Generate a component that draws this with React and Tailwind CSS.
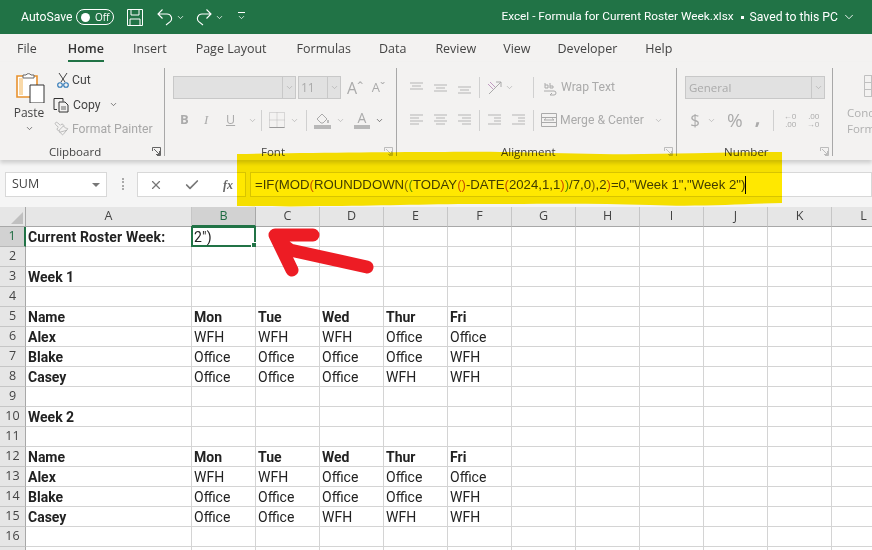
import React from 'react';
import { ChevronDown, X, Check, Paintbrush } from 'lucide-react';

const UI_FONT = 'font-["Open_Sans","Noto_Sans",sans-serif]';
const COLUMNS = ['A', 'B', 'C', 'D', 'E', 'F', 'G', 'H', 'I', 'J', 'K', 'L'];

const TABS = [
  { label: 'File', gap: 'ml-[17px]' },
  { label: 'Home', gap: 'ml-[31px]', active: true },
  { label: 'Insert', gap: 'ml-[29px]' },
  { label: 'Page Layout', gap: 'ml-[29px]' },
  { label: 'Formulas', gap: 'ml-[30px]' },
  { label: 'Data', gap: 'ml-[28px]' },
  { label: 'Review', gap: 'ml-[29px]' },
  { label: 'View', gap: 'ml-[27px]' },
  { label: 'Developer', gap: 'ml-[27px]' },
  { label: 'Help', gap: 'ml-[28px]' },
];

// sheet contents by row number, columns A to F
const ROWS = {
  1: [{ t: 'Current Roster Week:', b: true }],
  3: [{ t: 'Week 1', b: true }],
  5: ['Name', 'Mon', 'Tue', 'Wed', 'Thur', 'Fri'].map((t) => ({ t, b: true })),
  6: [{ t: 'Alex', b: true }, 'WFH', 'WFH', 'WFH', 'Office', 'Office'],
  7: [{ t: 'Blake', b: true }, 'Office', 'Office', 'Office', 'Office', 'WFH'],
  8: [{ t: 'Casey', b: true }, 'Office', 'Office', 'Office', 'WFH', 'WFH'],
  10: [{ t: 'Week 2', b: true }],
  12: ['Name', 'Mon', 'Tue', 'Wed', 'Thur', 'Fri'].map((t) => ({ t, b: true })),
  13: [{ t: 'Alex', b: true }, 'WFH', 'WFH', 'Office', 'Office', 'Office'],
  14: [{ t: 'Blake', b: true }, 'Office', 'Office', 'Office', 'Office', 'WFH'],
  15: [{ t: 'Casey', b: true }, 'Office', 'Office', 'WFH', 'WFH', 'WFH'],
};

function Chev({ className = '' }) {
  return <ChevronDown size={9} strokeWidth={1.6} className={`shrink-0 text-[#a6a6a6] ${className}`} />;
}

function Lines({ widths, className = '' }) {
  // alignment glyph: stacked grey bars
  return (
    <svg width="15" height="14" viewBox="0 0 15 14" className={`shrink-0 ${className}`}>
      {widths.map(([x1, x2, y]) => (
        <line key={y} x1={x1} x2={x2} y1={y} y2={y} stroke="#b5b5b5" strokeWidth="1" />
      ))}
    </svg>
  );
}

function Launcher({ dim }) {
  return (
    <svg width="9" height="9" viewBox="0 0 9 9" className="shrink-0">
      <path d="M.5 4V.5H8.5V8.5H5M2 2l5.5 5.5M7.5 4v3.5H4" fill="none" stroke={dim ? '#b5b5b5' : '#555'} strokeWidth="0.9" />
    </svg>
  );
}

function VSep({ className = '' }) {
  return <div className={`w-px h-[21px] bg-[#d0d0d0] shrink-0 ${className}`} />;
}

function UndoIcon({ className = '' }) {
  return (
    <svg width="16" height="18" viewBox="0 0 16 18" className={className}>
      <path d="M5.500 1.500L1 6l4.500 4.500M1 6h9a4.500 4.500 0 0 1 3.200 7.700L9 17" fill="none" stroke="currentColor" strokeWidth="1.100" />
    </svg>
  );
}

function Group({ width, label, labelClass, children, dim }) {
  return (
    <div className={`relative flex flex-col shrink-0 h-[88px] mt-[6px] border-r border-[#a8a8a8] ${width}`}>
      <div className="h-[76px] shrink-0">{children}</div>
      <div className="flex items-start h-[12px]">
        <span className={`text-[11.5px] leading-[16px] text-[#444] ${labelClass}`}>{label}</span>
        <span className="ml-auto mr-[3px] mt-[3px]"><Launcher dim={dim} /></span>
      </div>
    </div>
  );
}

function Clipboard() {
  return (
    <Group width="w-[165px]" label="Clipboard" labelClass="ml-[49px]">
      <div className="flex">
        <div className="flex flex-col items-center w-[48px] ml-[5px] pt-[4px]">
          <svg width="29" height="31" viewBox="0 0 29 31" className="ml-[3px]">
            <path d="M1 4h20v21H1z" fill="#fff" stroke="#e8912d" strokeWidth="1.6" />
            <path d="M3 6h4v17H3z" fill="#f9d9a8" />
            <path d="M7 5V3h3a3 3 0 0 1 5 0h3v3H7z" fill="#fff" stroke="#666" strokeWidth="1" />
            <path d="M14 13h14v18H14z" fill="#fff" stroke="#333" strokeWidth="1" />
          </svg>
          <span className="text-[12px] text-[#444] mt-[2px] leading-[16px]">Paste</span>
          <ChevronDown size={9} strokeWidth={1.8} className="text-[#444] mt-[3px]" />
        </div>
        <div className="flex flex-col ml-[2px] text-[12.2px] leading-[24px] font-['Roboto',sans-serif]">
          <div className="flex items-center h-[24px] text-[#444]">
            <svg width="12" height="16" viewBox="0 0 12 16" className="mr-[3px] ml-[2px]">
              <path d="M2 1l6 9M10 1L4 10" stroke="#444" strokeWidth="1" fill="none" />
              <circle cx="3" cy="13" r="2.300" fill="none" stroke="#2f78b7" strokeWidth="1.100" />
              <circle cx="9" cy="13" r="2.300" fill="none" stroke="#2f78b7" strokeWidth="1.100" />
            </svg>
            Cut
          </div>
          <div className="flex items-center h-[25px] text-[#444]">
            <svg width="17" height="16" viewBox="0 0 17 16" className="mr-[3px] -ml-[2px]">
              <path d="M5 1.500H1v11h3M5 1.500h5l0 3M6 5h6l3 3v7H6z" fill="none" stroke="#333" strokeWidth="1" />
              <path d="M8 10h5M8 12h5" stroke="#555" strokeWidth="0.9" />
            </svg>
            Copy
            <ChevronDown size={9} strokeWidth={1.8} className="ml-[9px] text-[#444]" />
          </div>
          <div className="flex items-center h-[23px] text-[#a8a8a8]">
            <Paintbrush size={15} strokeWidth={1.2} className="-ml-[1px] mr-[3px] text-[#aaa] -scale-x-100" />
            Format Painter
          </div>
        </div>
      </div>
    </Group>
  );
}

function Font() {
  return (
    <Group width="w-[232px]" label="Font" labelClass="ml-[96px] text-[#444]" dim>
      <div className="flex items-center pt-[8px] pl-[8px] h-[31px]">
        <div className="flex h-[23px] w-[123px] border border-[#c8c8c8] bg-[#e1e1e1]">
          <div className="flex-1" />
          <div className="w-[13px] flex items-center justify-center border-l border-[#c8c8c8]"><Chev /></div>
        </div>
        <div className="flex h-[23px] w-[43px] ml-[2px] border border-[#c8c8c8] bg-[#e1e1e1] text-[12px] text-[#aaa]">
          <span className="flex-1 pl-[2px] leading-[22px]">11</span>
          <div className="w-[13px] flex items-center justify-center border-l border-[#c8c8c8]"><Chev /></div>
        </div>
        <span className="ml-[6px] text-[16px] text-[#ababab]">Aˆ</span>
        <span className="ml-[8px] text-[13px] text-[#ababab]">Aˇ</span>
      </div>
      <div className="flex items-center pl-[15px] h-[36px] mt-[3px] text-[#ababab]">
        <span className="w-[24px] text-[13px] font-bold">B</span>
        <span className="w-[22px] text-[13px] italic font-['Liberation_Serif',serif]">I</span>
        <span className="w-[22px] text-[12.5px] underline">U</span>
        <Chev />
        <VSep className="ml-[4px]" />
        <svg width="16" height="16" viewBox="0 0 16 16" className="ml-[7px]">
          <path d="M.5.5h15v15H.5zM8 .5v15M.5 8h15" fill="none" stroke="#bbb" strokeDasharray="1 1" />
          <path d="M.5 15.500h15" stroke="#999" />
        </svg>
        <Chev className="ml-[5px]" />
        <VSep className="ml-[7px]" />
        <svg width="17" height="18" viewBox="0 0 17 18" className="ml-[7px]">
          <path d="M3 8l5-5 5 5-4 4H7z" fill="none" stroke="#aaa" />
          <path d="M14 9v3" stroke="#aaa" strokeWidth="1.5" />
          <rect x="0" y="14" width="17" height="4" fill="#b8b8b8" />
        </svg>
        <Chev className="ml-[5px]" />
        <div className="flex flex-col items-center w-[16px] ml-[9px]">
          <span className="text-[14px] leading-[14px]">A</span>
          <div className="w-[16px] h-[4px] bg-[#b8b8b8]" />
        </div>
        <ChevronDown size={9} strokeWidth={1.8} className="ml-[5px] text-[#444]" />
      </div>
    </Group>
  );
}

function Alignment() {
  const top = [[1, 14, 2], [3, 12, 5], [1, 14, 8]];
  const mid = [[1, 14, 4], [3, 12, 7], [1, 14, 10]];
  const low = [[1, 14, 6], [3, 12, 9], [1, 14, 12]];
  const left = [[1, 14, 2], [1, 10, 5], [1, 14, 8], [1, 10, 11]];
  const center = [[1, 14, 2], [3, 12, 5], [1, 14, 8], [3, 12, 11]];
  const right = [[1, 14, 2], [5, 14, 5], [1, 14, 8], [5, 14, 11]];
  const indent = [[1, 14, 2], [7, 14, 5], [7, 14, 8], [1, 14, 11]];
  return (
    <Group width="w-[280px]" label="Alignment" labelClass="ml-[104px] text-[#444]" dim>
      <div className="flex items-center pl-[12px] pt-[8px] h-[31px] text-[#ababab]">
        <Lines widths={top} />
        <Lines widths={mid} className="ml-[9px]" />
        <Lines widths={low} className="ml-[9px]" />
        <VSep className="ml-[7px]" />
        <svg width="16" height="16" viewBox="0 0 16 16" className="ml-[7px]">
          <path d="M2 14L14 2M9 2h5v5" fill="none" stroke="#aaa" />
          <path d="M1 4l5 5M3 2l5 5" stroke="#c09ac0" />
        </svg>
        <Chev className="ml-[2px]" />
        <VSep className="ml-[19px]" />
        <svg width="16" height="16" viewBox="0 0 16 16" className="ml-[9px]">
          <path d="M1 11h10a2 2 0 0 1 0 4H7M9 13l-2 2" fill="none" stroke="#aaa" />
          <path d="M2 8V3M2 5h3v3H2M7 3v5M7 6h3v2H7" fill="none" stroke="#aaa" />
        </svg>
        <span className="ml-[2px] text-[12.2px] font-['Roboto',sans-serif]">Wrap Text</span>
      </div>
      <div className="flex items-center pl-[12px] h-[36px] mt-[3px] text-[#ababab]">
        <Lines widths={left} />
        <Lines widths={center} className="ml-[9px]" />
        <Lines widths={right} className="ml-[9px]" />
        <VSep className="ml-[7px]" />
        <Lines widths={indent} className="ml-[7px]" />
        <Lines widths={indent} className="ml-[9px]" />
        <VSep className="ml-[7px]" />
        <svg width="16" height="16" viewBox="0 0 16 16" className="ml-[7px]">
          <path d="M.5 1.500h15v13H.5zM.5 5.500h15M.5 10.500h15M3 8h10M3 8l2-1.500M13 8l-2-1.500" fill="none" stroke="#aaa" />
        </svg>
        <span className="ml-[3px] text-[12.2px] font-['Roboto',sans-serif]">Merge &amp; Center</span>
        <Chev className="ml-[10px]" />
      </div>
    </Group>
  );
}

function NumberGroup() {
  return (
    <Group width="w-[156px]" label="Number" labelClass="ml-[47px] text-[#444]" dim>
      <div className="flex items-center pl-[8px] pt-[8px] h-[31px]">
        <div className="flex h-[23px] w-[140px] border border-[#c8c8c8] bg-[#e1e1e1] text-[11.5px] text-[#aaa]">
          <span className="flex-1 pl-[3px] leading-[21px]">General</span>
          <div className="w-[13px] flex items-center justify-center border-l border-[#c8c8c8]"><Chev /></div>
        </div>
      </div>
      <div className="flex items-center pl-[9px] h-[36px] mt-[3px] text-[#ababab]">
        <span className="text-[17px] w-[18px] text-center">$</span>
        <Chev className="ml-[3px]" />
        <span className="text-[19px] ml-[11px]">%</span>
        <span className="text-[20px] font-bold ml-[12px] leading-[20px] -mt-[6px]">,</span>
        <VSep className="ml-[13px]" />
        <div className="ml-[7px] text-[8px] leading-[8px] w-[15px] text-right">←0<br />.00</div>
        <div className="ml-[8px] text-[8px] leading-[8px] w-[15px] text-right">.00<br />→0</div>
      </div>
    </Group>
  );
}

function Ribbon() {
  return (
    <div className="flex shrink-0 h-[98px] bg-[#f3f2f1] overflow-hidden shadow-[0_3px_4px_rgba(0,0,0,0.16)] relative">
      <Clipboard />
      <Font />
      <Alignment />
      <NumberGroup />
      <div className="flex flex-col items-start ml-[14px] pt-[13px] text-[11.5px] leading-[16px] text-[#b0b0b0]">
        <svg width="22" height="22" viewBox="0 0 22 22" className="ml-[17px]">
          <path d="M.5.5h21v21H.5zM.5 7.500h21M.5 14.500h21M7.500.5v21" fill="none" stroke="#c0c0c0" />
        </svg>
        <span className="mt-[8px]">Cond</span>
        <span>Form</span>
      </div>
    </div>
  );
}

function Paren({ c, children }) {
  const colors = {
    o: 'text-[#c85a00]',
    p: 'text-[#8a7a10]',
    g: 'text-[#4f9a2a]',
  };
  return <span className={colors[c]}>{children}</span>;
}

function FormulaBar() {
  return (
    <div className="flex items-start shrink-0 h-[47px] bg-[#f5f5f5] pt-[12px]">
      <div className="flex items-center justify-between w-[102px] h-[25px] ml-[5px] bg-white border border-[#d8d8d8] pl-[6px] pr-[6px] text-[12.5px] text-[#444]">
        SUM
        <span className="w-0 h-0 border-x-[4px] border-x-transparent border-t-[4px] border-t-[#777]" />
      </div>
      <div className="w-[2px] h-[12px] mt-[6px] ml-[15px] border-l-2 border-dotted border-[#aaa]" />
      <div className="flex items-center w-[109px] h-[25px] ml-[13px] bg-white border border-[#d8d8d8] text-[#666]">
        <X size={14} strokeWidth={2} className="ml-[11px] text-[#777]" />
        <Check size={16} strokeWidth={2.6} className="ml-[21px] text-[#777]" />
        <span className="ml-[23px] text-[12px] italic font-bold font-['Liberation_Serif',serif]">fx</span>
      </div>
      <div className="flex items-center flex-1 h-[25px] ml-[4px] bg-white border border-[#d8d8d8] pl-[4px] text-[13.2px] text-[#444] font-['Liberation_Sans',sans-serif]">
        <span className="whitespace-pre">
          =IF(MOD<Paren c="o">(</Paren>ROUNDDOWN<Paren c="p">(</Paren><Paren c="g">(</Paren>TODAY<Paren c="o">()</Paren>-DATE<Paren c="o">(</Paren>2024,1,1<Paren c="o">)</Paren><Paren c="g">)</Paren>/7,0<Paren c="p">)</Paren>,2<Paren c="o">)</Paren>=0,"Week 1","Week 2")
        </span>
        <span className="w-px h-[18px] bg-black" />
      </div>
    </div>
  );
}

function Sheet() {
  const rows = Array.from({ length: 17 }, (_, i) => i + 1);
  return (
    <div className="grid shrink-0 grid-cols-[26px_166px_64px_64px_64px_64px_64px_64px_64px_64px_64px_64px_64px] grid-rows-[20px] auto-rows-[20px] text-[#222]">
      <div className="bg-[#e6e6e6] border-r border-b border-[#a8a8a8] flex items-end justify-end p-[2px]">
        <span className="w-0 h-0 border-l-[12px] border-l-transparent border-b-[12px] border-b-[#c0c0c0]" />
      </div>
      {COLUMNS.map((col) => (
        <div
          key={col}
          className={`flex items-center justify-center text-[12.5px] border-r ${UI_FONT} ${
            col === 'B'
              ? 'bg-[#d2d2d2] text-[#1e6b41] border-b-2 border-b-[#217346] border-r-[#a8a8a8]'
              : 'bg-[#e6e6e6] text-[#444] border-b border-b-[#a8a8a8] border-r-[#c6c6c6]'
          }`}
        >
          {col}
        </div>
      ))}
      {rows.map((n) => (
        <React.Fragment key={n}>
          <div
            className={`flex items-center justify-center text-[12.5px] border-b ${UI_FONT} ${
              n === 1
                ? 'bg-[#d2d2d2] text-[#1e6b41] border-r-2 border-r-[#217346] border-b-[#b8b8b8]'
                : 'bg-[#e6e6e6] text-[#444] border-r border-r-[#a8a8a8] border-b-[#c6c6c6]'
            }`}
          >
            {n}
          </div>
          {COLUMNS.map((col, i) => {
            const cell = ROWS[n]?.[i];
            const text = typeof cell === 'string' ? cell : cell?.t;
            const active = n === 1 && col === 'B';
            return (
              <div
                key={col}
                className={`relative flex items-center pt-[2px] whitespace-nowrap text-[14px] font-['Roboto',sans-serif] ${
                  cell?.b ? 'font-bold' : ''
                } ${n === 1 ? 'tracking-[0.15px]' : ''} ${active ? 'pl-[1px] border-2 border-[#217346] -ml-px -mt-px' : 'pl-[2px] border-r border-b border-[#d4d4d4]'}`}
              >
                {active ? '2")' : text}
                {active && <span className="absolute -right-[3px] -bottom-[3px] w-[6px] h-[6px] bg-[#217346] border border-white" />}
              </div>
            );
          })}
        </React.Fragment>
      ))}
    </div>
  );
}

export default function App() {
  return (
    <div className={`relative flex flex-col w-[872px] h-[550px] overflow-hidden bg-white ${UI_FONT}`}>
      {/* Title bar */}
      <div className="flex items-center h-[34px] shrink-0 bg-[#217346] text-white">
        <span className="ml-[21px] w-[48px] text-[12.2px] font-['Roboto',sans-serif]">AutoSave</span>
        <div className="flex items-center ml-[7px] w-[38px] h-[16px] rounded-full border border-white">
          <span className="ml-[4px] w-[9px] h-[9px] rounded-full bg-white" />
          <span className="ml-[5px] text-[10px]">Off</span>
        </div>
        <svg width="16" height="17" viewBox="0 0 16 17" className="ml-[13px]">
          <path d="M.5.5h15v16H.5zM4 .5v5.500h8V.5M3 16.500V10h10v6.500" fill="none" stroke="currentColor" strokeWidth="1" />
        </svg>
        <UndoIcon className="ml-[14px]" />
        <ChevronDown size={9} strokeWidth={2} className="ml-[3px]" />
        <UndoIcon className="ml-[11px] -scale-x-100" />
        <ChevronDown size={9} strokeWidth={2} className="ml-[3px]" />
        <div className="ml-[13px] flex flex-col items-center">
          <span className="w-[7px] h-px bg-white mb-[2px]" />
          <ChevronDown size={9} strokeWidth={2} className="-mt-[2px]" />
        </div>
        <span className="ml-auto text-[11.8px] whitespace-nowrap font-['Roboto',sans-serif]">Excel - Formula for Current Roster Week.xlsx</span>
        <span className="ml-[7px] w-[3px] h-[3px] bg-white" />
        <span className="ml-[6px] text-[12.2px] whitespace-nowrap font-['Roboto',sans-serif]">Saved to this PC</span>
        <ChevronDown size={14} strokeWidth={1.5} className="ml-[4px] mr-[16px]" />
      </div>

      {/* Tabs */}
      <div className="flex h-[28px] shrink-0 bg-[#f3f2f1] text-[12.5px] text-[#444]">
        {TABS.map((tab) => (
          <div key={tab.label} className={`relative flex items-center pt-[3px] ${tab.gap} ${tab.active ? 'font-semibold text-[#333]' : ''}`}>
            {tab.label}
            {tab.active && <span className="absolute left-0 right-0 bottom-0 h-[2px] bg-[#217346]" />}
          </div>
        ))}
      </div>

      <Ribbon />
      <FormulaBar />
      <Sheet />

      {/* Yellow highlighter scribble over the formula */}
      <svg width="872" height="550" viewBox="0 0 872 550" className="absolute inset-0 mix-blend-multiply pointer-events-none">
        <path
          d="M237 154C300 153 380 152 436 152C500 151 540 153 600 154C660 155 720 152 782 152L782 203C740 204 700 207 650 205C590 203 540 204 480 204C420 204 380 206 320 206C290 207 260 206 237 206Z"
          fill="#ffe800"
        />
      </svg>
      {/* Red arrow drawn on the screenshot */}
      <svg width="872" height="550" viewBox="0 0 872 550" className="absolute inset-0 pointer-events-none">
        <path
          d="M313 235L275 235L292 270M278 241L290 250L367 267"
          fill="none"
          stroke="#ed1c24"
          strokeWidth="13"
          strokeLinecap="round"
          strokeLinejoin="round"
        />
      </svg>
    </div>
  );
}
